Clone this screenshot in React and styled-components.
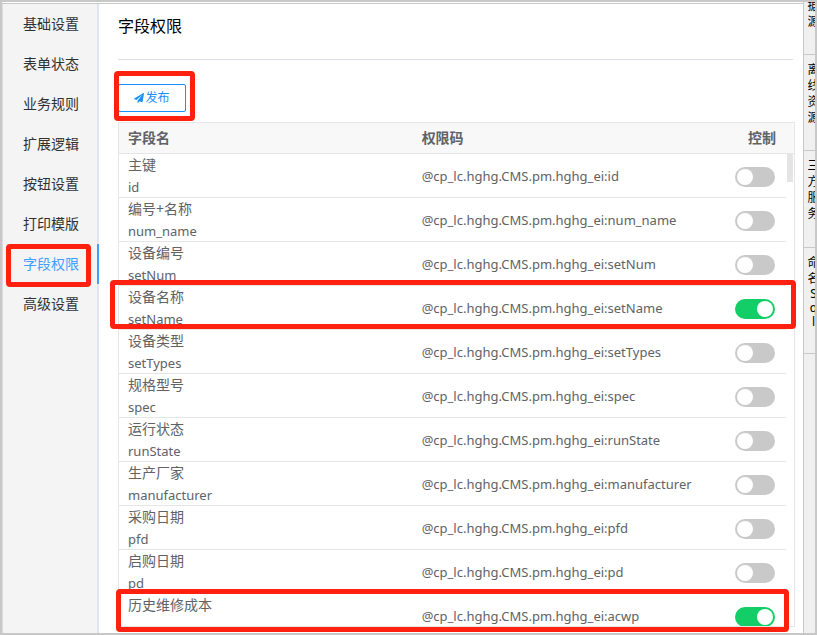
import React from "react";
import styled, { createGlobalStyle } from "styled-components";

const GlobalStyle = createGlobalStyle`
  * {
    box-sizing: border-box;
  }
  body {
    margin: 0;
    background: #fff;
    color: #606266;
    font-family: "Noto Sans", "Noto Sans CJK SC", sans-serif;
    font-size: 14px;
  }
`;

const Frame = styled.div`
  display: flex;
  height: 100vh;
  overflow: hidden;
  border: 2px solid #c8c8c8;
`;

const Workspace = styled.div`
  flex: 1;
  min-width: 0;
  display: flex;
  margin-top: 1px;
  border-top: 1px solid #c8c8c8;
`;

const Sidebar = styled.nav`
  flex: none;
  width: 97px;
  background: #f4f4f4;
  border-left: 1px solid #dcdcdc;
  border-right: 2px solid #dfe4ed;
`;

const MenuItem = styled.a`
  display: block;
  position: relative;
  height: 40px;
  margin-right: -2px;
  padding-left: 20px;
  border-right: 2px solid ${(props) => (props.$active ? "#409eff" : "transparent")};
  color: ${(props) => (props.$active ? "#409eff" : "#303133")};
  line-height: 40px;
  text-decoration: none;
`;

const Mark = styled.span`
  position: absolute;
  top: ${(props) => props.$top};
  right: ${(props) => props.$right};
  bottom: ${(props) => props.$bottom};
  left: ${(props) => props.$left};
  height: ${(props) => props.$height};
  border: 5px solid #ff2010;
  border-radius: 4px;
  pointer-events: none;
`;

const Content = styled.main`
  flex: 1;
  min-width: 0;
  display: flex;
  flex-direction: column;
  padding: 0 8px 6px 19px;
`;

const Title = styled.h1`
  flex: none;
  height: 56px;
  margin: 0 2px 24px 0;
  border-bottom: 1px solid #dcdfe6;
  color: #000;
  font-size: 16px;
  font-weight: 400;
  line-height: 44px;
`;

const Toolbar = styled.div`
  position: relative;
  flex: none;
  align-self: flex-start;
  margin-bottom: 10px;
`;

const PublishButton = styled.button`
  display: flex;
  align-items: center;
  justify-content: center;
  gap: 1px;
  width: 68px;
  height: 28px;
  padding: 0;
  border: 1px solid #1890ff;
  border-radius: 2px;
  background: #fff;
  color: #1890ff;
  font-family: inherit;
  font-size: 12px;
  line-height: 16px;
  svg {
    width: 10px;
    height: 10px;
  }
`;

const Panel = styled.section`
  position: relative;
  flex: 1;
  min-height: 0;
`;

const PanelBody = styled.div`
  height: 100%;
  overflow: hidden;
  border: 1px solid #e6e6e6;
`;

const Table = styled.table`
  width: 100%;
  table-layout: fixed;
  border-collapse: separate;
  border-spacing: 0;
`;

const HeadCell = styled.th`
  width: ${(props) => props.$width};
  height: 31px;
  padding: 0 ${(props) => (props.$gutter ? "0" : "10px 0 9px")};
  border-bottom: 1px solid #e6e6e6;
  background: #f8f8f8;
  font-weight: 700;
  line-height: 30px;
  text-align: ${(props) => props.$align || "left"};
`;

const Cell = styled.td`
  height: 44px;
  padding: 0 11px 0 9px;
  box-shadow: inset 0 -1px 0 #e6e6e6;
  font-size: 13px;
  line-height: 22px;
  text-align: ${(props) => props.$align || "left"};
  vertical-align: ${(props) => props.$valign || "middle"};
`;

const Gutter = styled.td`
  padding: 0 0 0 1px;
  vertical-align: top;
`;

const Thumb = styled.div`
  width: 6px;
  height: 28px;
  background: #e4e4e4;
`;

const FieldName = styled.label`
  display: block;
  font-size: 14px;
`;

const FieldKey = styled.div`
  color: #606266;
`;

const Switch = styled.input`
  appearance: none;
  display: block;
  width: 40px;
  height: 20px;
  margin: 1px 0 0 auto;
  padding: 2px;
  border-radius: 10px;
  background: #c9c9c9;
  &::before {
    content: "";
    display: block;
    width: 16px;
    height: 16px;
    border-radius: 50%;
    background: #fff;
  }
  &:checked {
    background: #13ce66;
  }
  &:checked::before {
    margin-left: auto;
  }
`;

const Dock = styled.aside`
  flex: none;
  width: 12px;
  overflow: hidden;
  border-left: 1px solid #c8c8c8;
  background: #f0f0f0;
`;

const DockTab = styled.div`
  display: flex;
  flex-direction: column;
  justify-content: ${(props) => props.$justify || "flex-start"};
  width: 16px;
  height: ${(props) => props.$height};
  padding: ${(props) => props.$pad} 0 ${(props) => props.$padEnd || "0"} 3px;
  border-bottom: 1px solid #c8c8c8;
  color: #000;
  font-size: 12px;
  line-height: 16px;
  text-align: center;
`;

const DockChar = styled.span`
  line-height: ${(props) => (props.$latin ? "14px" : "16px")};
`;

const menu = [
  "基础设置",
  "表单状态",
  "业务规则",
  "扩展逻辑",
  "按钮设置",
  "打印模版",
  "字段权限",
  "高级设置",
];

const fields = [
  { name: "主键", key: "id" },
  { name: "编号+名称", key: "num_name" },
  { name: "设备编号", key: "setNum" },
  { name: "设备名称", key: "setName", on: true },
  { name: "设备类型", key: "setTypes" },
  { name: "规格型号", key: "spec" },
  { name: "运行状态", key: "runState" },
  { name: "生产厂家", key: "manufacturer" },
  { name: "采购日期", key: "pfd" },
  { name: "启购日期", key: "pd" },
  { name: "历史维修成本", key: "acwp", on: true, hideKey: true },
];

const dockTabs = [
  { text: "据源", height: "53px", pad: "0", padEnd: "24px", justify: "flex-end" },
  { text: "离线资源", height: "96px", pad: "7px" },
  { text: "三方服务", height: "97px", pad: "7px" },
  { text: "命名Sql", height: "106px", pad: "7px" },
];

const PlaneIcon = () => (
  <svg viewBox="0 0 1792 1792" fill="currentColor" aria-hidden="true">
    <path d="M1764 11q33 24 27 64l-256 1536q-5 29-32 45-14 8-31 8-11 0-24-5l-453-185-242 295q-18 23-49 23-13 0-22-4-19-7-30.500-23.500t-11.500-36.500v-349l864-1059-1069 925-395-162q-37-14-40-55-2-40 32-59l1664-960q15-9 32-9 20 0 36 11z" />
  </svg>
);

const FieldRow = ({ field, first }) => (
  <tr>
    <Cell $valign="top">
      <FieldName htmlFor={`switch-${field.key}`}>{field.name}</FieldName>
      {!field.hideKey && <FieldKey>{field.key}</FieldKey>}
    </Cell>
    <Cell>@cp_lc.hghg.CMS.pm.hghg_ei:{field.key}</Cell>
    <Cell $align="right">
      <Switch
        type="checkbox"
        id={`switch-${field.key}`}
        defaultChecked={field.on}
      />
    </Cell>
    <Gutter>{first && <Thumb />}</Gutter>
  </tr>
);

const App = () => {
  return (
    <>
      <GlobalStyle />
      <Frame>
        <Workspace>
          <Sidebar>
            {menu.map((item) => (
              <MenuItem key={item} href="#" $active={item === "字段权限"}>
                {item}
                {item === "字段权限" && (
                  <Mark $top="0" $right="6px" $bottom="-3px" $left="3px" />
                )}
              </MenuItem>
            ))}
          </Sidebar>
          <Content>
            <Title>字段权限</Title>
            <Toolbar>
              <PublishButton type="button">
                <PlaneIcon />
                发布
              </PublishButton>
              <Mark $top="-13px" $right="-9px" $bottom="-9px" $left="-4px" />
            </Toolbar>
            <Panel>
              <PanelBody>
                <Table>
                  <thead>
                    <tr>
                      <HeadCell $width="43.5%">字段名</HeadCell>
                      <HeadCell>权限码</HeadCell>
                      <HeadCell $width="62px" $align="right">
                        控制
                      </HeadCell>
                      <HeadCell $width="8px" $gutter />
                    </tr>
                  </thead>
                  <tbody>
                    {fields.map((field, index) => (
                      <FieldRow
                        key={field.key}
                        field={field}
                        first={index === 0}
                      />
                    ))}
                  </tbody>
                </Table>
              </PanelBody>
              <Mark $top="158px" $right="-1px" $left="-8px" $height="49px" />
              <Mark $top="467px" $right="6px" $left="-2px" $height="43px" />
            </Panel>
          </Content>
        </Workspace>
        <Dock>
          {dockTabs.map((tab) => (
            <DockTab
              key={tab.text}
              $height={tab.height}
              $pad={tab.pad}
              $padEnd={tab.padEnd}
              $justify={tab.justify}
            >
              {[...tab.text].map((char, index) => (
                <DockChar key={index} $latin={/[a-z]/i.test(char)}>
                  {char}
                </DockChar>
              ))}
            </DockTab>
          ))}
        </Dock>
      </Frame>
    </>
  );
};

export default App;
